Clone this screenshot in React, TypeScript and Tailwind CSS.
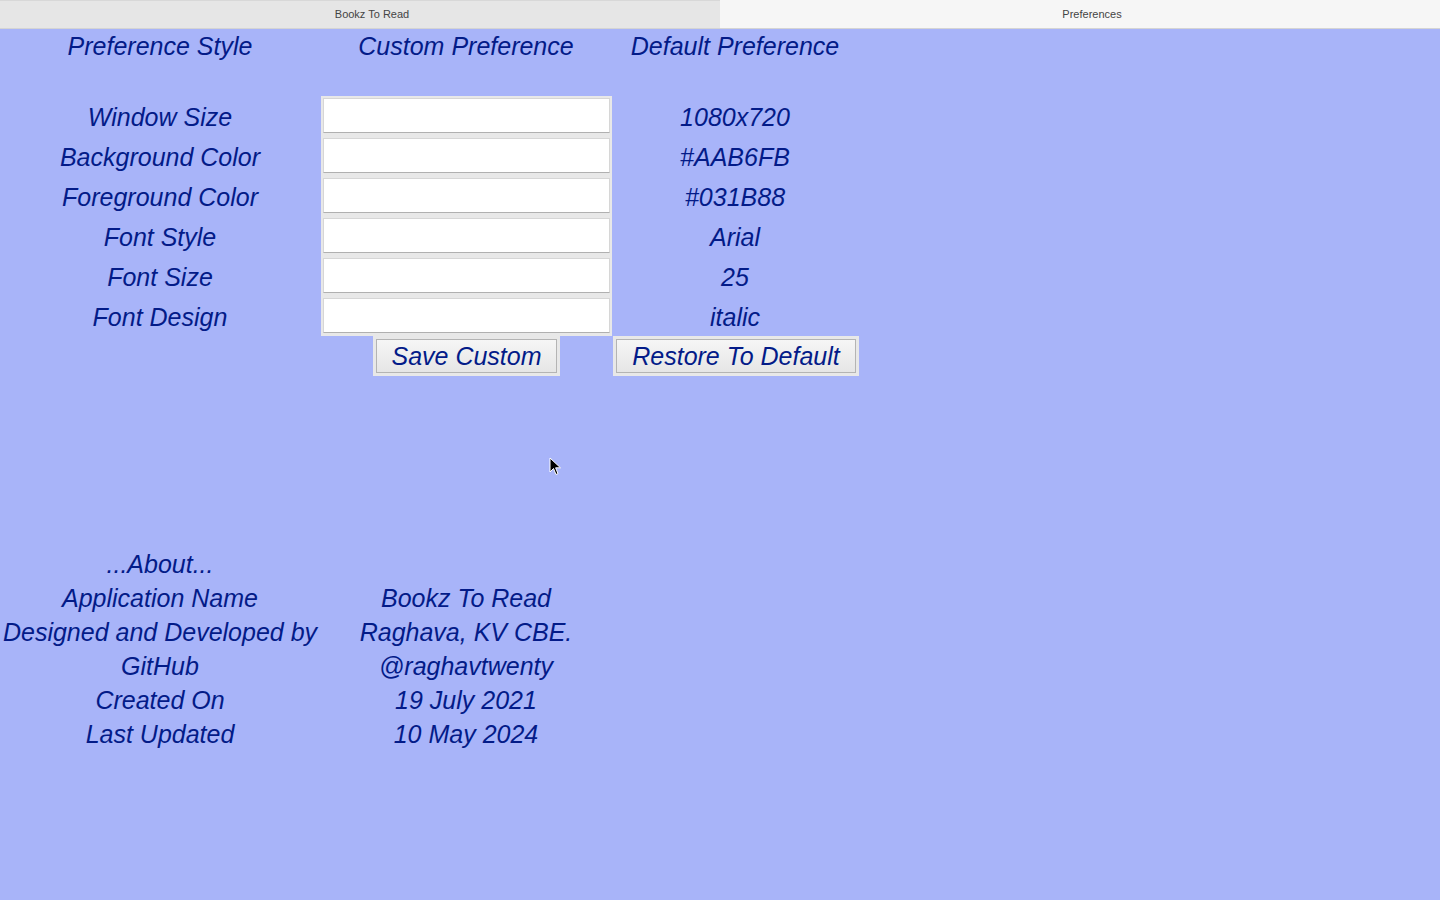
const prefs = [
  { label: "Window Size", value: "1080x720" },
  { label: "Background Color", value: "#AAB6FB" },
  { label: "Foreground Color", value: "#031B88" },
  { label: "Font Style", value: "Arial" },
  { label: "Font Size", value: "25" },
  { label: "Font Design", value: "italic" },
];

const about = [
  { label: "Application Name", value: "Bookz To Read" },
  { label: "Designed and Developed by", value: "Raghava, KV CBE." },
  { label: "GitHub", value: "@raghavtwenty" },
  { label: "Created On", value: "19 July 2021" },
  { label: "Last Updated", value: "10 May 2024" },
];

const font = "[font-family:'Liberation_Sans',Arial,sans-serif]";

export default function App() {
  return (
    <div className={`relative h-[900px] w-[1440px] overflow-hidden bg-[#a8b4f9] ${font}`}>
      {/* tabs */}
      <div className="flex h-[29px] border-b border-[#d4d4d4] bg-[#e6e6e6] text-[11px] text-[#444]">
        <div className="flex w-[720px] items-center justify-center border-t border-[#d8d8d8] bg-[#e6e6e6] pl-6">
          Bookz To Read
        </div>
        <div className="flex w-[720px] items-center justify-center bg-[#f6f6f6] pl-6">
          Preferences
        </div>
      </div>

      <div className="text-[25px] italic text-[#031b88]">
        <div className="grid grid-cols-[320px_292px_246px] leading-[35px]">
          <div className="text-center">Preference Style</div>
          <div className="text-center">Custom Preference</div>
          <div className="text-center">Default Preference</div>
        </div>

        <div className="mt-[32px] grid grid-cols-[320px_292px_246px]">
          <div className="flex flex-col">
            {prefs.map((p) => (
              <div key={p.label} className="h-[40px] text-center leading-[42px]">
                {p.label}
              </div>
            ))}
          </div>
          <div className="ml-[1px] flex flex-col gap-[5px] bg-[#e8e8e8] p-[2px]">
            {prefs.map((p) => (
              <input
                key={p.label}
                className="h-[35px] w-full border border-[#d6d6d6] border-b-[#b0b0b0] bg-white outline-none"
              />
            ))}
          </div>
          <div className="flex flex-col">
            {prefs.map((p) => (
              <div key={p.label} className="h-[40px] text-center leading-[42px]">
                {p.value}
              </div>
            ))}
          </div>

          <div />
          <div className="flex justify-center">
            <div className="ml-[1px] flex bg-[#e8e8e8] p-[3px]">
              <button className="h-[34px] w-[181px] border border-[#b4b4b4] bg-gradient-to-b from-[#f6f6f6] to-[#e6e6e6] text-[25px] italic leading-[32px] text-[#031b88]">
                Save Custom
              </button>
            </div>
          </div>
          <div className="flex">
            <div className="ml-[1px] flex bg-[#e8e8e8] p-[3px]">
              <button className="h-[34px] w-[240px] border border-[#b4b4b4] bg-gradient-to-b from-[#f6f6f6] to-[#e6e6e6] text-[25px] italic leading-[32px] text-[#031b88]">
                Restore To Default
              </button>
            </div>
          </div>
        </div>

        <div className="mt-[170px] grid grid-cols-[320px_292px]">
          <div className="h-[34px] text-center leading-[36px]">...About...</div>
          <div />
          {about.map((a) => (
            <div key={a.label} className="contents">
              <div className="h-[34px] whitespace-nowrap text-center leading-[36px]">{a.label}</div>
              <div className="h-[34px] whitespace-nowrap text-center leading-[36px]">{a.value}</div>
            </div>
          ))}
        </div>
      </div>

      {/* mouse pointer */}
      <svg className="absolute left-[549px] top-[457px]" width="14" height="20" viewBox="0 0 14 20">
        <path d="M1 1 L1 15 L4.5 11.5 L7 17.5 L9 16.6 L6.6 10.8 L11.5 10.8 Z" fill="#000" stroke="#fff" strokeWidth="1" />
      </svg>
    </div>
  );
}
